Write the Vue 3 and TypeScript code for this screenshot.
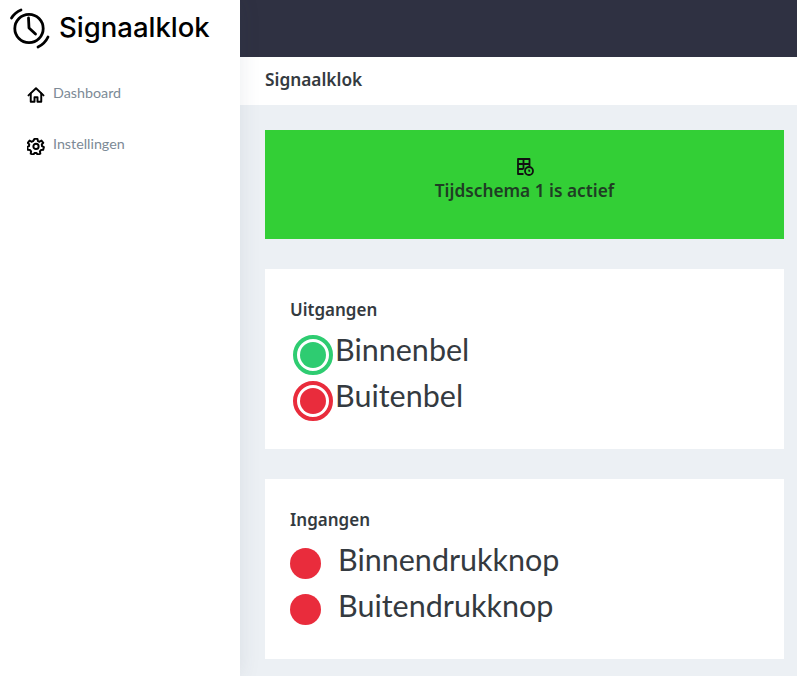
<script setup lang="ts">
const nav = [
  { label: 'Dashboard', icon: 'home' },
  { label: 'Instellingen', icon: 'gear' },
]
const outputs = [
  { label: 'Binnenbel', color: 'green' },
  { label: 'Buitenbel', color: 'red' },
]
const inputs = ['Binnendrukknop', 'Buitendrukknop']
</script>

<template>
  <div class="page">
    <aside class="sidebar">
      <div class="brand">
        <svg class="logo" width="40" height="40" viewBox="0 0 40 40" fill="none" stroke="#000" stroke-width="2.800" stroke-linecap="round" stroke-linejoin="round">
          <circle cx="19" cy="20.500" r="14.200" />
          <path d="M18.500 10 19 20l6.500 6" />
          <path d="M1.500 10A20.300 20.300 0 0 1 11 2" />
          <path d="M28 39A20.500 20.500 0 0 0 38 29" />
        </svg>
        <span class="brand-name">Signaalklok</span>
      </div>
      <nav class="nav">
        <a v-for="item in nav" :key="item.label" class="nav-item">
          <svg v-if="item.icon === 'home'" class="nav-icon" viewBox="0 0 24 24" fill="none" stroke="#000" stroke-width="2.600" stroke-linejoin="round" stroke-linecap="round">
            <path d="M2 12.500 12 3l10 9.500" />
            <path d="M5 10v11h5v-6h4v6h5V10" />
          </svg>
          <svg v-else class="nav-icon" viewBox="0 0 24 24" fill="none" stroke="#000" stroke-width="2.600" stroke-linejoin="round">
            <path d="M10 2.500h4l.6 3 2.100.9 2.600-1.700 2.400 3-2 2.200.3 2.200 2.500 1.400-1 3.700-2.900.2-1.400 1.800.6 2.900-3.500 1.500-1.800-2.400h-2.300l-1.800 2.400-3.500-1.500.6-2.900-1.400-1.800-2.900-.2-1-3.700 2.500-1.400.3-2.200-2-2.200 2.400-3 2.600 1.700 2.100-.9z" />
            <circle cx="12" cy="12.500" r="3.500" />
          </svg>
          <span>{{ item.label }}</span>
        </a>
      </nav>
    </aside>

    <div class="main">
      <div class="topbar"></div>
      <header class="header">Signaalklok</header>
      <main class="content">
        <section class="banner">
          <svg class="banner-icon" width="20" height="20" viewBox="0 0 20 20" fill="none" stroke="#111" stroke-width="1.800" stroke-linejoin="round">
            <path d="M8.500 17H3V2h11.500v7" />
            <path d="M3 7h11.500M3 12h5.500M8.500 2v10" />
            <circle cx="14" cy="14" r="4" />
            <path d="M14 12.500V14h1.200" stroke-width="1.300" />
          </svg>
          <div class="banner-text">Tijdschema 1 is actief</div>
        </section>

        <section class="card">
          <h2 class="card-title">Uitgangen</h2>
          <div class="out-list">
            <div v-for="o in outputs" :key="o.label" class="out-row">
              <span class="ring" :class="o.color"></span>
              <span class="big">{{ o.label }}</span>
            </div>
          </div>
        </section>

        <section class="card">
          <h2 class="card-title">Ingangen</h2>
          <div class="in-list">
            <div v-for="name in inputs" :key="name" class="in-row">
              <span class="dot"></span>
              <span class="big">{{ name }}</span>
            </div>
          </div>
        </section>
      </main>
    </div>
  </div>
</template>

<style>
html, body { margin: 0; background: #fff; overflow: hidden; }
</style>

<style scoped>
.page {
  display: flex;
  width: 797px;
  height: 676px;
  overflow: hidden;
  font-family: "Lato", "Noto Sans", sans-serif;
  color: #343a40;
}
.sidebar {
  width: 240px;
  flex: none;
  background: #fff;
  box-shadow: 0 0 20px rgba(60, 70, 90, .1);
  position: relative;
  z-index: 1;
}
.brand {
  display: flex;
  align-items: center;
  height: 57px;
  padding-left: 10px;
  gap: 9px;
}
.logo { flex: none; margin-top: -1px; overflow: visible; }
.brand-name {
  font-family: "Inter", sans-serif;
  font-size: 27.500px;
  font-weight: 500;
  color: #000;
  letter-spacing: 0;
  margin-top: -3px;
}
.nav { padding: 26px 0 0 27px; display: flex; flex-direction: column; gap: 29px; }
.nav-item {
  display: flex;
  align-items: flex-start;
  gap: 8px;
  height: 22px;
  font-size: 14.300px;
  line-height: 20px;
  color: #7c8a96;
}
.nav-icon { width: 18px; height: 18px; margin-top: 3px; flex: none; }
.main { flex: 1; min-width: 0; display: flex; flex-direction: column; }
.topbar { height: 57px; background: #2f3142; flex: none; }
.header {
  height: 48px;
  flex: none;
  background: #fff;
  padding-left: 25px;
  font-family: "Noto Sans", sans-serif;
  font-size: 17.300px;
  font-weight: 600;
  line-height: 46px;
  color: #343a40;
}
.content {
  flex: 1;
  background: #ecf0f4;
  padding: 25px 13px 0 25px;
  display: flex;
  flex-direction: column;
  gap: 30px;
}
.banner {
  height: 109px;
  background: #33cf36;
  text-align: center;
  padding-top: 27px;
  box-sizing: border-box;
  flex: none;
}
.banner-icon { display: block; margin: 0 auto; }
.banner-text {
  font-family: "Noto Sans", sans-serif;
  font-size: 17.300px;
  font-weight: 600;
  line-height: 23px;
  margin-top: 2px;
  color: #1f3d24;
}
.card {
  height: 180px;
  flex: none;
  box-sizing: border-box;
  background: #fff;
  padding: 30px 25px 0;
}
.card-title {
  margin: 0;
  font-family: "Noto Sans", sans-serif;
  font-size: 17px;
  font-weight: 600;
  line-height: 22px;
  color: #343a40;
}
.out-list { margin-top: 7px; padding-left: 3px; }
.out-row { display: flex; align-items: flex-start; height: 46px; }
.ring {
  width: 32px;
  height: 32px;
  flex: none;
  margin-top: 7px;
  border-radius: 50%;
  position: relative;
  margin-right: 2px;
  border: 4px solid;
}
.ring::after {
  content: "";
  position: absolute;
  inset: 3px;
  border-radius: 50%;
}
.ring.green { border-color: #2ecc71; background: #fff; }
.ring.green::after { background: #2ecc71; }
.ring.red { border-color: #e92c3c; background: #fff; }
.ring.red::after { background: #e92c3c; }
.big { font-size: 30.500px; line-height: 42px; color: #343a40; font-weight: 400; }
.in-list { margin-top: 7px; }
.in-row { display: flex; align-items: flex-start; height: 46px; }
.dot {
  width: 31px;
  height: 31px;
  flex: none;
  margin-top: 10px;
  margin-right: 17px;
  border-radius: 50%;
  background: #e92c3c;
}
</style>
